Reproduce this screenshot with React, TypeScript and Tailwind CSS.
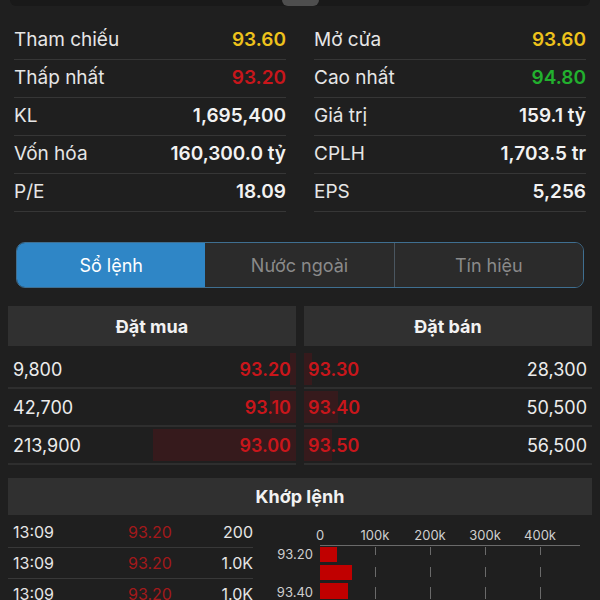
import React from 'react';

const font = { fontFamily: 'Inter, "Noto Sans", sans-serif' };

type Stat = { label: string; value: string; color?: string };

const leftStats: Stat[] = [
  { label: 'Tham chiếu', value: '93.60', color: 'text-[#eec21c]' },
  { label: 'Thấp nhất', value: '93.20', color: 'text-[#c8161b]' },
  { label: 'KL', value: '1,695,400' },
  { label: 'Vốn hóa', value: '160,300.0 tỷ' },
  { label: 'P/E', value: '18.09' },
];

const rightStats: Stat[] = [
  { label: 'Mở cửa', value: '93.60', color: 'text-[#eec21c]' },
  { label: 'Cao nhất', value: '94.80', color: 'text-[#22b02e]' },
  { label: 'Giá trị', value: '159.1 tỷ' },
  { label: 'CPLH', value: '1,703.5 tr' },
  { label: 'EPS', value: '5,256' },
];

const bids = [
  { vol: '9,800', price: '93.20', bar: 6 },
  { vol: '42,700', price: '93.10', bar: 26 },
  { vol: '213,900', price: '93.00', bar: 143 },
];

const asks = [
  { vol: '28,300', price: '93.30', bar: 8 },
  { vol: '50,500', price: '93.40', bar: 34 },
  { vol: '56,500', price: '93.50', bar: 28 },
];

const trades = [
  { time: '13:09', price: '93.20', vol: '200' },
  { time: '13:09', price: '93.20', vol: '1.0K' },
  { time: '13:09', price: '93.20', vol: '1.0K' },
];

const StatColumn: React.FC<{ items: Stat[] }> = ({ items }) => (
  <div className="flex flex-col">
    {items.map((s) => (
      <div key={s.label} className="h-[38px] flex items-center justify-between border-b border-[#363636] text-[19px]">
        <span className="text-[#e6e6e6]">{s.label}</span>
        <span className={`font-semibold ${s.color ?? 'text-[#f2f2f2]'}`}>{s.value}</span>
      </div>
    ))}
  </div>
);

const VolumeChart: React.FC = () => {
  const ticks = [
    { x: 58, label: '0' },
    { x: 113, label: '100k' },
    { x: 168, label: '200k' },
    { x: 223, label: '300k' },
    { x: 278, label: '400k' },
  ];
  return (
    <svg width="330" height="84" viewBox="0 0 330 84" className="block">
      {ticks.map((t) => (
        <text key={t.label} x={t.x} y="25" textAnchor="middle" fill="#cfcfcf" fontSize="13" fontFamily="Inter, sans-serif">
          {t.label}
        </text>
      ))}
      <line x1="58" y1="30.5" x2="318" y2="30.5" stroke="#6a6a6a" strokeWidth="1" />
      {ticks.slice(1).map((t) => (
        <g key={t.x}>
          <line x1={t.x + 0.5} y1="32" x2={t.x + 0.5} y2="40" stroke="#6a6a6a" />
          <line x1={t.x + 0.5} y1="52" x2={t.x + 0.5} y2="62" stroke="#6a6a6a" />
          <line x1={t.x + 0.5} y1="72" x2={t.x + 0.5} y2="84" stroke="#6a6a6a" />
        </g>
      ))}
      <rect x="58" y="32" width="17" height="15" fill="#c00000" />
      <rect x="58" y="50" width="32" height="15" fill="#c00000" />
      <rect x="58" y="68" width="28" height="16" fill="#c00000" />
      <text x="51" y="44" textAnchor="end" fill="#cfcfcf" fontSize="13" fontFamily="Inter, sans-serif">93.20</text>
      <text x="51" y="82" textAnchor="end" fill="#cfcfcf" fontSize="13" fontFamily="Inter, sans-serif">93.40</text>
    </svg>
  );
};

export default function App() {
  return (
    <div className="w-[600px] h-[600px] overflow-hidden bg-[#1f1f1f] text-white" style={font}>
      <div className="mx-[10px] h-[6px] bg-[#191919] rounded-b-md flex justify-center">
        <div className="w-[37px] h-[6px] bg-[#4e4e4e] rounded-b-md" />
      </div>

      <div className="px-[14px] pt-[16px] grid grid-cols-2 gap-x-[28px]">
        <StatColumn items={leftStats} />
        <StatColumn items={rightStats} />
      </div>

      <div className="mx-[16px] mt-[30px] h-[46px] flex rounded-[9px] border border-[#3f6f91] overflow-hidden text-[18px]">
        <div className="flex-1 flex items-center justify-center bg-[#2f86c6] text-white">Sổ lệnh</div>
        <div className="flex-1 flex items-center justify-center bg-[#2b2b2b] text-[#8a8a8a] border-r border-[#4a5660]">Nước ngoài</div>
        <div className="flex-1 flex items-center justify-center bg-[#2b2b2b] text-[#8a8a8a]">Tín hiệu</div>
      </div>

      <div className="px-[8px] mt-[18px] grid grid-cols-2 gap-x-[8px]">
        <div>
          <div className="h-[40px] bg-[#303030] flex items-center justify-center font-bold text-[18px] text-[#f2f2f2]">Đặt mua</div>
          <div className="pt-[5px]">
            {bids.map((b) => (
              <div key={b.price} className="relative h-[38px] flex items-center justify-between border-b-2 border-[#2e2e2e] text-[18px]">
                <div className="absolute right-0 top-[2px] bottom-[2px] bg-[#361a1c]" style={{ width: b.bar }} />
                <span className="relative pl-[5px] text-[#ececec]">{b.vol}</span>
                <span className="relative pr-[5px] font-semibold text-[#c8161b]">{b.price}</span>
              </div>
            ))}
          </div>
        </div>
        <div>
          <div className="h-[40px] bg-[#303030] flex items-center justify-center font-bold text-[18px] text-[#f2f2f2]">Đặt bán</div>
          <div className="pt-[5px]">
            {asks.map((a) => (
              <div key={a.price} className="relative h-[38px] flex items-center justify-between border-b-2 border-[#2e2e2e] text-[18px]">
                <div className="absolute left-0 top-[2px] bottom-[2px] bg-[#361a1c]" style={{ width: a.bar }} />
                <span className="relative pl-[4px] font-semibold text-[#c8161b]">{a.price}</span>
                <span className="relative pr-[5px] text-[#ececec]">{a.vol}</span>
              </div>
            ))}
          </div>
        </div>
      </div>

      <div className="px-[8px] mt-[13px]">
        <div className="h-[37px] bg-[#303030] flex items-center justify-center font-bold text-[18px] text-[#f2f2f2]">Khớp lệnh</div>
        <div className="flex">
          <div className="w-[245px] pt-[2px]">
            {trades.map((t, i) => (
              <div key={i} className="h-[31px] grid grid-cols-[84px_116px_1fr] items-center border-b border-[#383838] text-[16px]">
                <span className="pl-[5px] text-[#e6e6e6]">{t.time}</span>
                <span className="text-center text-[#a3191b]">{t.price}</span>
                <span className="text-right text-[#e6e6e6]">{t.vol}</span>
              </div>
            ))}
          </div>
          <div className="ml-[9px]">
            <VolumeChart />
          </div>
        </div>
      </div>
    </div>
  );
}
